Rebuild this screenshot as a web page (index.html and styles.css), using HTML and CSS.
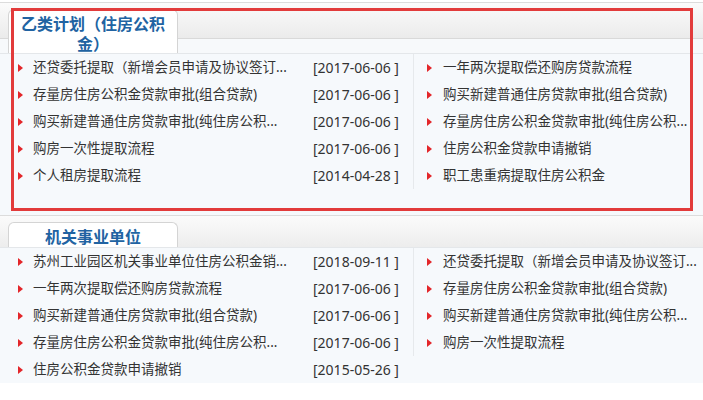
FILE: index.html
```html
<!DOCTYPE html>
<html lang="zh-CN">
<head>
<meta charset="utf-8">
<title>住房公积金</title>
<link rel="stylesheet" href="styles.css">
</head>
<body>
<div class="page">
  <section class="box box-first">
    <div class="hd"><h2 class="tab">乙类计划（住房公积金）</h2></div>
    <div class="bd bd-first">
      <ul class="col col-left">
        <li><span class="t">还贷委托提取（新增会员申请及协议签订...</span><span class="d">[2017-06-06 ]</span></li>
        <li><span class="t">存量房住房公积金贷款审批(组合贷款)</span><span class="d">[2017-06-06 ]</span></li>
        <li><span class="t">购买新建普通住房贷款审批(纯住房公积...</span><span class="d">[2017-06-06 ]</span></li>
        <li><span class="t">购房一次性提取流程</span><span class="d">[2017-06-06 ]</span></li>
        <li><span class="t">个人租房提取流程</span><span class="d">[2014-04-28 ]</span></li>
      </ul>
      <ul class="col col-right">
        <li><span class="t">一年两次提取偿还购房贷款流程</span></li>
        <li><span class="t">购买新建普通住房贷款审批(组合贷款)</span></li>
        <li><span class="t">存量房住房公积金贷款审批(纯住房公积...</span></li>
        <li><span class="t">住房公积金贷款申请撤销</span></li>
        <li><span class="t">职工患重病提取住房公积金</span></li>
      </ul>
    </div>
  </section>
  <section class="box">
    <div class="hd"><h2 class="tab">机关事业单位</h2></div>
    <div class="bd">
      <ul class="col col-left">
        <li><span class="t">苏州工业园区机关事业单位住房公积金销...</span><span class="d">[2018-09-11 ]</span></li>
        <li><span class="t">一年两次提取偿还购房贷款流程</span><span class="d">[2017-06-06 ]</span></li>
        <li><span class="t">购买新建普通住房贷款审批(组合贷款)</span><span class="d">[2017-06-06 ]</span></li>
        <li><span class="t">存量房住房公积金贷款审批(纯住房公积...</span><span class="d">[2017-06-06 ]</span></li>
        <li><span class="t">住房公积金贷款申请撤销</span><span class="d">[2015-05-26 ]</span></li>
      </ul>
      <ul class="col col-right">
        <li><span class="t">还贷委托提取（新增会员申请及协议签订...</span></li>
        <li><span class="t">存量房住房公积金贷款审批(组合贷款)</span></li>
        <li><span class="t">购买新建普通住房贷款审批(纯住房公积...</span></li>
        <li><span class="t">购房一次性提取流程</span></li>
      </ul>
    </div>
  </section>
  <div class="highlight"></div>
</div>
</body>
</html>
```
FILE: styles.css
```css
html, body {
  margin: 0;
  padding: 0;
  background: #ffffff;
}
body {
  font-family: "Noto Sans", "Noto Sans CJK SC", sans-serif;
  font-size: 13.5px;
  color: #333333;
  overflow: hidden;
}
.page {
  position: relative;
  width: 703px;
  height: 400px;
  overflow: hidden;
}
.box-first {
  margin-top: 2px;
}
.hd {
  border-top: 1px solid #dcdcdc;
  border-bottom: 1px solid #e4e7ea;
  padding: 6px 0 0 8px;
  background-color: #f7f9fb;
  background-image:
    linear-gradient(#d9d9d9, #d9d9d9),
    linear-gradient(#fbfbfb, #ebebeb);
  background-repeat: no-repeat;
  background-size: 100% 1px, 100% 35px;
  background-position: 0 35px, 0 0;
}
.tab {
  margin: 0;
  width: 170px;
  box-sizing: border-box;
  padding: 3px 7px 1px;
  background: #ffffff;
  border: 1px solid #d4d4d4;
  border-bottom: none;
  border-radius: 6px 6px 0 0;
  font-family: "Noto Sans CJK SC", sans-serif;
  font-size: 16px;
  line-height: 20px;
  font-weight: bold;
  color: #2163a2;
  text-align: center;
}
.box-first .tab {
  padding-bottom: 0;
}
.bd {
  background: #f6f9fc;
  display: grid;
  grid-template-columns: 413px 1fr;
  align-items: start;
}
.bd-first {
  padding-bottom: 26px;
}
.col {
  list-style: none;
  margin: 0;
  padding: 0;
}
.col li {
  display: flex;
  align-items: center;
  height: 27px;
  line-height: 27px;
  white-space: nowrap;
  overflow: hidden;
}
.col li::before {
  content: "";
  flex: none;
  width: 0;
  height: 0;
  border-left: 5px solid #e3262a;
  border-top: 4px solid transparent;
  border-bottom: 4px solid transparent;
}
.col-left li {
  padding-left: 18px;
}
.col-left li::before {
  margin-right: 10px;
}
.col-left .t {
  width: 280px;
  flex: none;
  overflow: hidden;
}
.col-right {
  border-left: 1px solid #e6e9ec;
}
.col-right li {
  padding-left: 13px;
}
.col-right li::before {
  margin-right: 11px;
}
.d {
  font-size: 14px;
  color: #333333;
}
.highlight {
  position: absolute;
  left: 11px;
  top: 8px;
  width: 682px;
  height: 203px;
  box-sizing: border-box;
  border: 3px solid #e23b3b;
  pointer-events: none;
}
```
